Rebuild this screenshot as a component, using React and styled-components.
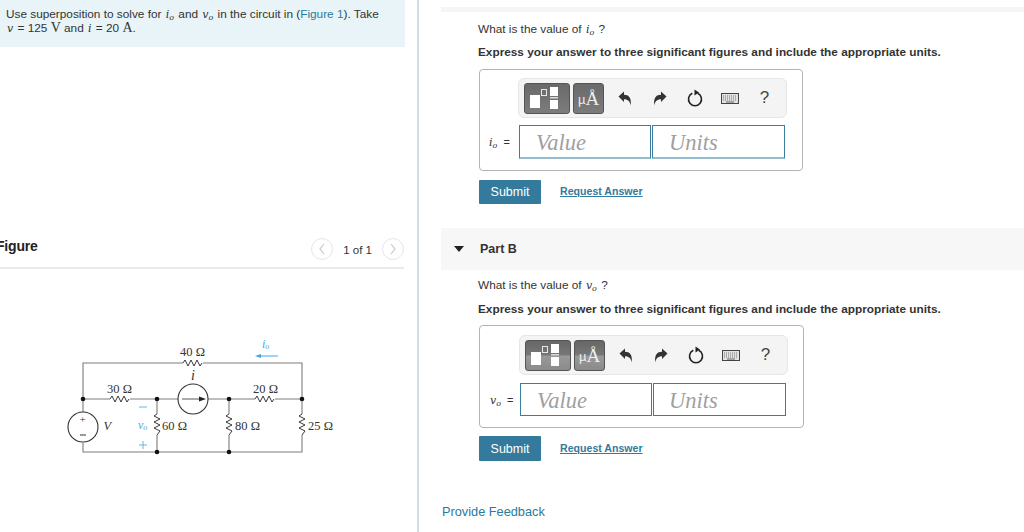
import React from "react";
import styled, { createGlobalStyle } from "styled-components";

const Global = createGlobalStyle`
  html, body { margin: 0; padding: 0; background: #fff; }
  body { font-family: "Liberation Sans", Arial, sans-serif; color: #333; overflow: hidden; }
`;

const Page = styled.div`
  width: 1024px;
  height: 532px;
  display: grid;
  grid-template-columns: 417px 2px 1fr;
  overflow: hidden;
`;

const LeftColumn = styled.div`
  overflow: hidden;
`;

const Divider = styled.div`
  background: #d3dbe6;
`;

const RightColumn = styled.div`
  padding: 7px 0 0 22px;
  display: flex;
  flex-direction: column;
`;

const Intro = styled.div`
  width: 405px;
  height: 47px;
  background: #e8f4f7;
  padding: 7px 5px 0 6px;
  box-sizing: border-box;
  font-size: 11.8px;
  line-height: 14px;
  color: #333;
`;

const Link = styled.span`
  color: #2a7a9e;
`;

const M = styled.i`
  font-family: "DejaVu Serif", serif;
  font-size: 11px;
  line-height: 0;
  margin: 0 1px;
  sub {
    font-size: 8px;
    line-height: 0;
    vertical-align: -2px;
  }
`;

const R = styled.span`
  font-family: "Liberation Serif", serif;
  font-size: 14px;
  line-height: 0;
`;

const FigureHead = styled.div`
  width: 404px;
  height: 48px;
  margin-top: 174px;
  box-sizing: border-box;
  border-bottom: 2px solid #eaeaea;
  display: flex;
  align-items: center;
  margin-bottom: 61px;
  padding-top: 18px;
`;

const FigureTitle = styled.div`
  font-weight: bold;
  font-size: 14px;
  color: #222;
  margin-left: -4px;
  margin-right: auto;
  letter-spacing: -0.2px;
  position: relative;
  top: -7px;
`;

const Pager = styled.div`
  display: flex;
  align-items: center;
  gap: 10px;
  font-size: 11.5px;
  color: #333;
  position: relative;
  top: -4px;
  span {
    margin-top: 2px;
  }
`;

const PagerBtn = styled.div`
  width: 22px;
  height: 22px;
  border: 1px solid #e6e6e6;
  border-radius: 50%;
  box-sizing: border-box;
  display: flex;
  align-items: center;
  justify-content: center;
`;

const Circuit = styled.svg`
  display: block;
  margin-left: 60px;
`;

const Strip = styled.div`
  height: 5px;
  background: #f5f5f5;
`;

const Section = styled.div`
  padding-left: 37px;
  display: flex;
  flex-direction: column;
`;

const Question = styled.div`
  font-size: 11.8px;
  line-height: 14px;
  color: #333;
  margin-top: ${(p) => p.$top}px;
`;

const Hint = styled.div`
  font-size: 11.8px;
  font-weight: bold;
  line-height: 14px;
  color: #333;
  margin-top: ${(p) => p.$top}px;
`;

const AnswerBox = styled.div`
  width: ${(p) => p.$w}px;
  box-sizing: border-box;
  height: ${(p) => p.$h}px;
  margin: ${(p) => p.$top}px 0 0 1px;
  border: 1px solid #b4b4b4;
  border-radius: 4px;
  padding: ${(p) => p.$pad}px 0 0 ${(p) => p.$inset}px;
`;

const Toolbar = styled.div`
  width: 269px;
  height: 40px;
  box-sizing: border-box;
  background: #f4f4f4;
  border: 1px solid #e6e6e6;
  border-radius: 6px;
  display: flex;
  align-items: center;
  padding-left: 5px;
`;

const TplBtn = styled.div`
  height: 31px;
  width: ${(p) => p.$w}px;
  margin-right: 3px;
  box-sizing: border-box;
  border-radius: 3px;
  border: 1px solid #555;
  background: ${(p) =>
    p.$split
      ? "linear-gradient(#666 0, #777 48%, #999 52%, #8a8a8a 100%)"
      : "linear-gradient(#6a6a6a, #7c7c7c)"};
  display: flex;
  align-items: center;
  justify-content: center;
  color: #eee;
  font-family: "Liberation Serif", serif;
  font-size: 19px;
  line-height: 1;
  small {
    font-family: "Liberation Sans", sans-serif;
    font-size: 13px;
    margin-top: 3px;
  }
`;

const IconSlot = styled.div`
  width: 35px;
  height: 30px;
  display: flex;
  align-items: center;
  justify-content: center;
  color: #444;
  font-size: 17px;
  flex: none;
`;

const AnswerRow = styled.div`
  display: flex;
  align-items: center;
  margin-top: ${(p) => p.$top}px;
  margin-left: -30px;
`;

const AnswerLabel = styled.div`
  width: 31px;
  font-size: 11px;
  word-spacing: 2px;
  color: #333;
  text-align: left;
  white-space: nowrap;
`;

const Field = styled.div`
  width: ${(p) => p.$w}px;
  height: ${(p) => p.$h}px;
  margin-right: 1px;
  box-sizing: border-box;
  border: 1px solid #3a7d9c;
  border-bottom: ${(p) => (p.$soft ? "2px solid #93bccd" : "1px solid #3a7d9c")};
  padding: 2px 0 0 ${(p) => p.$pad}px;
  display: flex;
  align-items: center;
  font-family: "Liberation Serif", serif;
  font-style: italic;
  font-size: 22.5px;
  color: #a0a0a0;
`;

const Actions = styled.div`
  display: flex;
  align-items: center;
  margin: ${(p) => p.$top}px 0 0 1px;
`;

const SubmitBtn = styled.div`
  width: 62px;
  height: ${(p) => p.$h}px;
  background: #347a9c;
  border-radius: 1px;
  color: #fff;
  font-size: 12.5px;
  display: flex;
  align-items: center;
  justify-content: center;
`;

const RequestLink = styled.div`
  margin: 0 0 2px 19px;
  font-size: 10.6px;
  font-weight: bold;
  color: #347a9c;
  text-decoration: underline;
`;

const PartBand = styled.div`
  height: 42px;
  margin-top: 24px;
  background: #f7f7f7;
  display: flex;
  align-items: center;
  padding-left: 13px;
`;

const Caret = styled.div`
  width: 0;
  height: 0;
  border-left: 5px solid transparent;
  border-right: 5px solid transparent;
  border-top: 6px solid #222;
  margin-right: 16px;
`;

const PartTitle = styled.div`
  font-size: 12.5px;
  font-weight: bold;
  color: #333;
`;

const Feedback = styled.div`
  margin: 43px 0 0 1px;
  font-size: 12.75px;
  color: #2a7a9e;
`;

const PagerChevron = ({ flip }) => (
  <svg width="8" height="12" viewBox="0 0 8 12">
    <path
      d={flip ? "M2 1l4 5-4 5" : "M6 1L2 6l4 5"}
      fill="none"
      stroke="#c8c8c8"
      strokeWidth="1.2"
    />
  </svg>
);

const TemplateIcon = () => (
  <svg width="36" height="24" viewBox="0 0 36 24">
    <rect x="1" y="9" width="10" height="13" fill="#fff" />
    <rect x="12.500" y="3.500" width="5" height="6" fill="none" stroke="#e8e8e8" strokeWidth="1" />
    <rect x="21" y="1" width="8" height="9" fill="#fff" />
    <rect x="21" y="11" width="8" height="1.500" fill="#ddd" />
    <rect x="21" y="14" width="8" height="9" fill="#fff" />
  </svg>
);

const UndoIcon = ({ flip }) => (
  <svg width="14" height="15" viewBox="0 0 14 15" style={flip ? { transform: "scaleX(-1)" } : undefined}>
    <path d="M0.500 5.500 6 0.500v3.200c4.800 0 7.500 2.800 6.800 10.800C12 10.500 10 8.300 6 8.300v2.700z" fill="#333" />
  </svg>
);

const ResetIcon = () => (
  <svg width="16" height="18" viewBox="0 0 16 18">
    <path d="M5.300 4.300a6.500 6.500 0 1 0 5.400 0" fill="none" stroke="#222" strokeWidth="1.600" />
    <path d="M7.500 0.500v6l4.500-3z" fill="#222" />
  </svg>
);

const KeyboardIcon = () => (
  <svg width="18" height="11" viewBox="0 0 18 11">
    <rect x="0.500" y="0.500" width="17" height="10" fill="#e2e2e2" stroke="#444" />
    <path d="M2 3h14M2 5h14M2 7h14" stroke="#777" strokeWidth="1" strokeDasharray="1 1" />
    <path d="M5 9h8" stroke="#666" strokeWidth="1" />
  </svg>
);

const MathToolbar = ({ split }) => (
  <Toolbar>
    <TplBtn $w={46} $split={split}>
      <TemplateIcon />
    </TplBtn>
    <TplBtn $w={31} $split={split}>
      <small>µ</small>Å
    </TplBtn>
    <IconSlot>
      <UndoIcon />
    </IconSlot>
    <IconSlot>
      <UndoIcon flip />
    </IconSlot>
    <IconSlot>
      <ResetIcon />
    </IconSlot>
    <IconSlot>
      <KeyboardIcon />
    </IconSlot>
    <IconSlot>?</IconSlot>
  </Toolbar>
);

const Resistor = ({ d }) => <path d={d} fill="none" stroke="#222" strokeWidth="0.900" />;

const Node = ({ x, y }) => <circle cx={x} cy={y} r="2.300" fill="#111" />;

const ohmText = { fontFamily: "'Liberation Serif', serif", fontSize: 12.5, fill: "#333" };
const blueText = { fontFamily: "'Liberation Serif', serif", fontSize: 12, fill: "#4aa3dc", fontStyle: "italic" };

// offsets: origin of this drawing sits at page x=60, y=330
const CircuitDiagram = () => (
  <Circuit width="290" height="130" viewBox="0 0 290 130">
    <g fill="none" stroke="#7d7d7d" strokeWidth="1.100">
      <path d="M23 97V33H123M143 33H242V69M242 69V84M242 105V122H23V113M23 82V69H50M70 69H118M148 69H195M215 69H242M97 69V84M97 105V122M169 69V84M169 105V122" />
    </g>
    <Resistor d="M123 33l2-3 3 6 3-6 3 6 3-6 3 6 2-3" />
    <Resistor d="M50 69l2-3 3 6 3-6 3 6 3-6 3 6 2-3" />
    <Resistor d="M195 69l2-3 3 6 3-6 3 6 3-6 3 6 2-3" />
    <Resistor d="M97 84l-3 2 6 3-6 3 6 3-6 3 6 3-3 4" />
    <Resistor d="M169 84l-3 2 6 3-6 3 6 3-6 3 6 3-3 4" />
    <Resistor d="M242 84l-3 2 6 3-6 3 6 3-6 3 6 3-3 4" />
    <circle cx="133" cy="69" r="15" fill="#fff" stroke="#333" strokeWidth="1.100" />
    <path d="M122 69h18" stroke="#444" strokeWidth="0.900" />
    <path d="M146 69l-7-2.500v5z" fill="#222" />
    <circle cx="23" cy="97" r="15" fill="#fff" stroke="#333" strokeWidth="1.100" />
    <text x="19.500" y="93" style={{ ...ohmText, fontSize: 11 }}>+</text>
    <path d="M20 105h6" stroke="#333" strokeWidth="1" />
    <Node x={23} y={69} />
    <Node x={97} y={69} />
    <Node x={169} y={69} />
    <Node x={242} y={69} />
    <Node x={97} y={122} />
    <Node x={169} y={122} />
    <text x="120" y="26" style={ohmText}>40 Ω</text>
    <text x="47" y="62.500" style={ohmText}>30 Ω</text>
    <text x="193" y="62.500" style={ohmText}>20 Ω</text>
    <text x="102" y="100" style={ohmText}>60 Ω</text>
    <text x="175" y="100" style={ohmText}>80 Ω</text>
    <text x="248" y="100" style={ohmText}>25 Ω</text>
    <text x="43.500" y="100" style={{ ...ohmText, fontStyle: "italic" }}>V</text>
    <text x="131" y="50" style={{ ...ohmText, fontStyle: "italic", fontSize: 14 }}>i</text>
    <text x="78" y="99" style={blueText}>v<tspan fontSize="8" dy="1">o</tspan></text>
    <text x="202" y="18" style={blueText}>i<tspan fontSize="8" dy="1">o</tspan></text>
    <path d="M79 77h8" stroke="#6db3e0" strokeWidth="1" />
    <path d="M79 115h8M83 111v8" stroke="#6db3e0" strokeWidth="1" />
    <path d="M218 26h-20" stroke="#4aa3dc" strokeWidth="1" />
    <path d="M195 26l6-2v4z" fill="#4aa3dc" />
  </Circuit>
);

const Io = () => (
  <M>
    i<sub>o</sub>
  </M>
);

const Vo = () => (
  <M>
    v<sub>o</sub>
  </M>
);

export default function App() {
  return (
    <Page>
      <Global />
      <LeftColumn>
        <Intro>
          Use superposition to solve for <Io /> and <Vo /> in the circuit in (<Link>Figure 1</Link>). Take
          <br />
          <M>v</M> = 125 <R>V</R> and <M>i</M> = 20 <R>A</R>.
        </Intro>
        <FigureHead>
          <FigureTitle>Figure</FigureTitle>
          <Pager>
            <PagerBtn>
              <PagerChevron />
            </PagerBtn>
            <span>1 of 1</span>
            <PagerBtn>
              <PagerChevron flip />
            </PagerBtn>
          </Pager>
        </FigureHead>
        <CircuitDiagram />
      </LeftColumn>
      <Divider />
      <RightColumn>
        <Strip />
        <Section>
          <Question $top={10}>
            What is the value of <Io /> ?
          </Question>
          <Hint $top={9}>Express your answer to three significant figures and include the appropriate units.</Hint>
          <AnswerBox $w={324} $h={102} $top={10} $pad={8} $inset={38}>
            <MathToolbar />
            <AnswerRow $top={7}>
              <AnswerLabel>
                <Io /> =
              </AnswerLabel>
              <Field $w={132} $h={34} $pad={16} $soft>Value</Field>
              <Field $w={133} $h={34} $pad={16} $soft>Units</Field>
            </AnswerRow>
          </AnswerBox>
          <Actions $top={9}>
            <SubmitBtn $h={24}>Submit</SubmitBtn>
            <RequestLink>Request Answer</RequestLink>
          </Actions>
        </Section>
        <PartBand>
          <Caret />
          <PartTitle>Part B</PartTitle>
        </PartBand>
        <Section>
          <Question $top={8}>
            What is the value of <Vo /> ?
          </Question>
          <Hint $top={10}>Express your answer to three significant figures and include the appropriate units.</Hint>
          <AnswerBox $w={325} $h={103} $top={9} $pad={9} $inset={39}>
            <MathToolbar split />
            <AnswerRow $top={8}>
              <AnswerLabel>
                <Vo /> =
              </AnswerLabel>
              <Field $w={132} $h={33} $pad={16}>Value</Field>
              <Field $w={133} $h={33} $pad={15}>Units</Field>
            </AnswerRow>
          </AnswerBox>
          <Actions $top={8}>
            <SubmitBtn $h={25}>Submit</SubmitBtn>
            <RequestLink>Request Answer</RequestLink>
          </Actions>
        </Section>
        <Feedback>Provide Feedback</Feedback>
      </RightColumn>
    </Page>
  );
}
